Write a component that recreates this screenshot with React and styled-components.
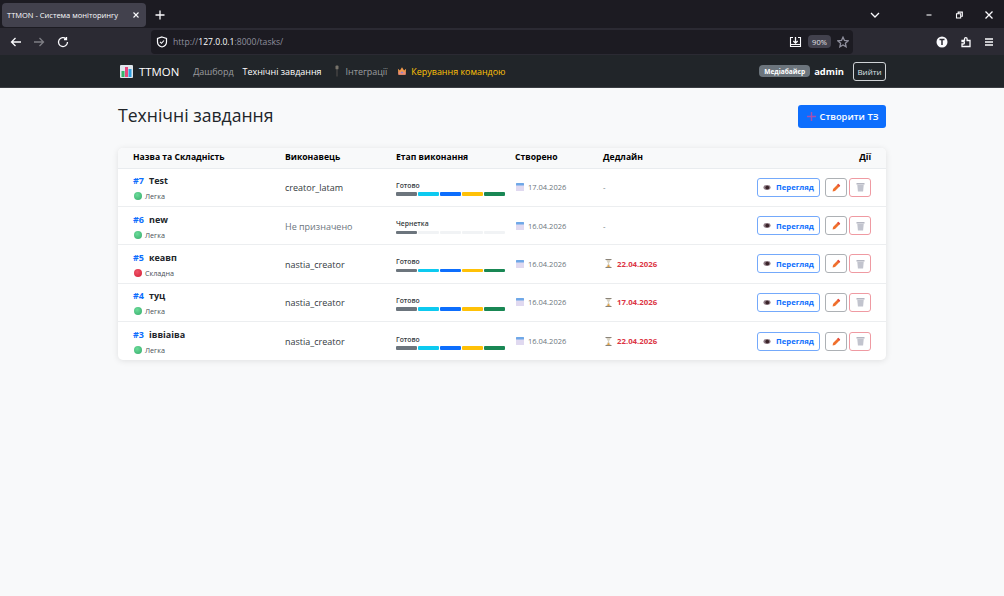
import React from 'react';
import styled, { createGlobalStyle } from 'styled-components';

const GlobalStyle = createGlobalStyle`
  html, body {
    margin: 0;
    height: 100%;
    background: #f8f9fa;
  }
  body {
    font-family: 'Open Sans', 'Noto Sans', 'Liberation Sans', sans-serif;
    overflow: hidden;
  }
`;

const Page = styled.div`
  width: 1004px;
  height: 596px;
  display: flex;
  flex-direction: column;
  background: #f8f9fa;
`;

/* browser chrome */
const TabStrip = styled.div`
  height: 28px;
  padding: 2px 0 0 2px;
  box-sizing: border-box;
  background: #1c1b22;
  display: flex;
  align-items: flex-start;
  color: #fbfbfe;
`;

const Tab = styled.div`
  width: 144px;
  height: 24px;
  padding: 0 5px;
  margin-top: 1px;
  box-sizing: border-box;
  background: #42414d;
  border-radius: 4px;
  display: flex;
  align-items: center;
  justify-content: space-between;
  font-size: 7.5px;
  white-space: nowrap;
`;

const StripButton = styled.div`
  display: flex;
  align-items: center;
  justify-content: center;
  width: 28px;
  height: 24px;
  margin-top: 1px;
`;

const WindowButtons = styled.div`
  margin-left: auto;
  display: flex;
  align-items: center;
  height: 26px;
`;

const WindowButton = styled.div`
  width: 30px;
  height: 26px;
  display: flex;
  align-items: center;
  justify-content: center;
`;

const Chevron = styled(WindowButton)`
  margin-right: 24px;
`;

const Toolbar = styled.div`
  height: 27px;
  background: #2b2a33;
  display: flex;
  align-items: center;
  padding-left: 4px;
  color: #fbfbfe;
`;

const ToolIcon = styled.div`
  width: 23.5px;
  height: 24px;
  display: flex;
  align-items: center;
  justify-content: center;
  opacity: ${p => (p.$dim ? 0.4 : 1)};
`;

const UrlBar = styled.div`
  width: 702px;
  height: 24px;
  margin-left: 76.5px;
  padding: 0 4px 0 5px;
  box-sizing: border-box;
  border-radius: 4px;
  background: #1c1b22;
  display: flex;
  align-items: center;
  gap: 5px;
  font-size: 8.6px;
  color: #8f8f9d;
`;

const Host = styled.span`
  color: #fbfbfe;
`;

const UrlRight = styled.div`
  margin-left: auto;
  display: flex;
  align-items: center;
  gap: 6px;
`;

const Zoom = styled.span`
  width: 23px;
  height: 13px;
  border-radius: 4px;
  background: #42414d;
  color: #e0e0e6;
  font-size: 7.5px;
  display: flex;
  align-items: center;
  justify-content: center;
`;

const ToolRight = styled.div`
  margin-left: auto;
  margin-right: 3px;
  display: flex;
  align-items: center;
`;

/* navbar */
const Navbar = styled.nav`
  height: 33px;
  box-sizing: border-box;
  background: #212529;
  border-bottom: 1px solid #3a3d42;
  padding: 0 118px 0 120px;
  display: flex;
  align-items: center;
`;

const Brand = styled.div`
  display: flex;
  align-items: center;
  gap: 6px;
  font-size: 11.4px;
  color: #fff;
  margin-right: 14px;
`;

const NavLink = styled.span`
  font-size: 8.95px;
  margin-right: ${p => p.$gap || 10}px;
  color: ${p => p.$color || 'rgba(255,255,255,.55)'};
  display: flex;
  align-items: center;
  gap: ${p => p.$iconGap || 4}px;
`;

const UserBox = styled.div`
  margin-left: auto;
  display: flex;
  align-items: center;
`;

const RoleBadge = styled.span`
  background: #6c757d;
  color: #fff;
  border-radius: 4px;
  font-size: 6.6px;
  font-weight: 700;
  padding: 1.5px 5px;
  margin-right: 4px;
  line-height: 9px;
`;

const UserName = styled.span`
  color: #fff;
  font-size: 9.4px;
  font-weight: 700;
  margin-right: 9px;
`;

const LogoutButton = styled.span`
  width: 33px;
  height: 19px;
  box-sizing: border-box;
  border: 1px solid #d0d3d6;
  border-radius: 3px;
  color: #dee2e6;
  font-size: 8px;
  display: flex;
  align-items: center;
  justify-content: center;
`;

/* content */
const Container = styled.main`
  width: 768px;
  margin: 0 0 0 118px;
  padding-top: 17px;
`;

const PageHeader = styled.div`
  display: flex;
  align-items: center;
  justify-content: space-between;
  height: 23px;
  margin-bottom: 20px;
`;

const Title = styled.h1`
  margin: 0 0 4px;
  font-size: 17.6px;
  font-weight: 400;
  color: #212529;
`;

const CreateButton = styled.div`
  width: 88px;
  height: 23px;
  border-radius: 3px;
  background: #0d6efd;
  color: #fff;
  font-size: 9.4px;
  font-weight: 600;
  display: flex;
  align-items: center;
  justify-content: center;
  gap: 3px;
`;

const TableCard = styled.section`
  background: #fff;
  border-radius: 5px;
  box-shadow: 0 1px 6px rgba(0, 0, 0, .1);
  overflow: hidden;
`;

const gridColumns = '152px 111px 119px 88px 1fr';

const HeadRow = styled.div`
  display: grid;
  grid-template-columns: ${gridColumns};
  height: 20.5px;
  box-sizing: border-box;
  padding: 0 15px 2px;
  align-items: center;
  background: #f8f9fa;
  border-bottom: 1px solid #e9ecef;
  font-size: 8.6px;
  font-weight: 700;
  color: #000;
`;

const HeadActions = styled.span`
  text-align: right;
`;

const Row = styled.div`
  display: grid;
  grid-template-columns: ${gridColumns};
  height: 38.4px;
  box-sizing: border-box;
  padding: 0 15px;
  align-items: center;
  border-bottom: ${p => (p.$last ? 'none' : '1px solid #eceef0')};
`;

const TaskCell = styled.div`
  display: flex;
  flex-direction: column;
  gap: 4px;
  padding-top: 2px;
`;

const TaskTitle = styled.div`
  display: flex;
  align-items: center;
  gap: 5px;
  font-size: 9px;
  font-weight: 700;
  color: #212529;
  line-height: 12px;
`;

const TaskId = styled.span`
  color: #0d6efd;
`;

const Difficulty = styled.div`
  display: flex;
  align-items: center;
  gap: 3px;
  margin-left: 1px;
  font-size: 7.2px;
  color: #495057;
  line-height: 10px;
`;

const Dot = styled.span`
  width: 8px;
  height: 8px;
  border-radius: 50%;
  background: ${p => (p.$hard
    ? 'radial-gradient(circle at 40% 35%, #f0556a, #d21f35)'
    : 'radial-gradient(circle at 40% 35%, #6cdc9a, #35ab6b)')};
`;

const Assignee = styled.span`
  font-size: 9px;
  padding-top: 1px;
  color: ${p => (p.$none ? '#6c757d' : '#343a40')};
`;

const Stage = styled.div`
  display: flex;
  flex-direction: column;
  gap: 2.5px;
  width: 109px;
  padding-top: 2px;
`;

const StageLabel = styled.span`
  font-size: 6.8px;
  font-weight: 600;
  color: #343a40;
  line-height: 9px;
`;

const StageBar = styled.div`
  display: grid;
  grid-template-columns: repeat(5, 1fr);
  gap: 1.5px;
`;

const StageStep = styled.span`
  height: 3.5px;
  border-radius: 1px;
  background: ${p => p.$color || '#f1f3f5'};
`;

const DateCell = styled.div`
  display: flex;
  align-items: center;
  gap: 4px;
  padding-left: 1px;
  font-size: 7.5px;
  color: #6c757d;
`;

const Deadline = styled.div`
  display: flex;
  align-items: center;
  gap: 5px;
  margin-left: ${p => (p.$late ? 2 : 0)}px;
  font-size: 7.8px;
  color: ${p => (p.$late ? '#dc3545' : '#6c757d')};
  font-weight: ${p => (p.$late ? 700 : 400)};
`;

const DeadlineCell = styled.div`
  display: flex;
  align-items: center;
  justify-content: space-between;
`;

const Actions = styled.div`
  display: flex;
  align-items: center;
  gap: 2px;
`;

const ActionButton = styled.div`
  height: 19px;
  width: 22px;
  box-sizing: border-box;
  border-radius: 3px;
  border: 1px solid ${p => p.$border};
  display: flex;
  align-items: center;
  justify-content: center;
`;

const ViewButton = styled(ActionButton)`
  width: 63px;
  margin-right: 3px;
  gap: 5px;
  font-size: 7.7px;
  font-weight: 700;
  color: #0d6efd;
`;

const ChartIcon = () => (
  <svg width="13" height="13" viewBox="0 0 13 13">
    <rect width="13" height="13" rx="1" fill="#dfe6ec" />
    <rect x="1.5" y="6" width="3" height="6" fill="#35b56b" />
    <rect x="5" y="2" width="3" height="10" fill="#e8467c" />
    <rect x="8.5" y="4" width="3" height="8" fill="#2f9fe0" />
  </svg>
);

const PinIcon = () => (
  <svg width="6" height="12" viewBox="0 0 6 12">
    <rect x="1.5" y="0.5" width="3" height="4" rx="1" fill="#77736a" />
    <rect x="2.4" y="4.5" width="1.2" height="7" fill="#4b4a48" />
  </svg>
);

const CrownIcon = () => (
  <svg width="10" height="10" viewBox="0 0 11 10">
    <path d="M1 2.5 3.2 4.5 5.5 1 7.8 4.5 10 2.5 9.4 9H1.6Z" fill="#f2994a" />
    <rect x="1.6" y="6" width="7.8" height="3" fill="#e98a7a" />
    <circle cx="5.5" cy="6.5" r="1" fill="#7a83d8" />
  </svg>
);

const PlusIcon = () => (
  <svg width="11" height="11" viewBox="0 0 11 11">
    <path d="M5.5 1v9M1 5.5h9" stroke="#a84fb0" strokeWidth="1.4" />
  </svg>
);

const EyeIcon = () => (
  <svg width="8" height="7" viewBox="0 0 9 7">
    <ellipse cx="4.5" cy="3.5" rx="4" ry="2.8" fill="#8d7a84" />
    <circle cx="4.8" cy="3.5" r="2.1" fill="#3a2328" />
  </svg>
);

const PencilIcon = () => (
  <svg width="9" height="9" viewBox="0 0 9 9">
    <path d="M6.3.8 8.2 2.7 3 7.9.6 8.4 1.1 6Z" fill="#f0702c" />
    <path d="M6.3.8 8.2 2.7 7.2 3.7 5.3 1.8Z" fill="#e2484a" />
  </svg>
);

const TrashIcon = () => (
  <svg width="9" height="10" viewBox="0 0 9 10">
    <rect x="0.5" y="1" width="8" height="1.6" fill="#b5b7c2" />
    <path d="M1.3 3h6.4l-.6 6.6H1.9Z" fill="#c2c4ce" />
  </svg>
);

const CalendarIcon = () => (
  <svg width="8" height="8" viewBox="0 0 8 8">
    <rect width="8" height="8" rx="0.6" fill="#e0d9f0" />
    <rect width="8" height="2.6" rx="0.6" fill="#6fa8e8" />
  </svg>
);

const HourglassIcon = () => (
  <svg width="7" height="9" viewBox="0 0 7 9">
    <path d="M.5.5h6M.5 8.5h6" stroke="#8a8378" />
    <path d="M1.2 1h4.6L3.9 4.5 5.8 8H1.2L3.1 4.5Z" fill="#d9d3c4" />
    <path d="M2.2 8 3.5 5.5 4.8 8Z" fill="#e9a13c" />
  </svg>
);

const ShieldIcon = () => (
  <svg width="12" height="12" viewBox="0 0 12 12" fill="none">
    <path d="M6 1 10.5 2.5V6C10.5 8.5 8.5 10.3 6 11 3.5 10.3 1.5 8.5 1.5 6V2.5Z" stroke="#fbfbfe" strokeWidth="1.2" />
    <path d="M4 5.8 5.5 7.3 8 4.5" stroke="#fbfbfe" strokeWidth="1.1" />
  </svg>
);

const SaveIcon = () => (
  <svg width="13" height="12" viewBox="0 0 13 12" fill="none" stroke="#fbfbfe" strokeWidth="1.1">
    <path d="M4 1.500H1.500V10.500H11.500V1.500H9" />
    <path d="M6.500 1V7M4.300 5 6.500 7.200 8.700 5" strokeWidth="1.300" />
    <path d="M1.500 8.500H11.500" />
  </svg>
);

const Line = ({ d, w = 12, size = 12 }) => (
  <svg width={size} height={size} viewBox={`0 0 ${w} ${w}`} fill="none" stroke="currentColor" strokeWidth="1.3">
    <path d={d} />
  </svg>
);

const PROGRESS = ['#6c757d', '#0dcaf0', '#0d6efd', '#ffc107', '#198754'];

const TASKS = [
  { id: 7, name: 'Test', hard: false, user: 'creator_latam', done: 5, created: '17.04.2026', deadline: null },
  { id: 6, name: 'new', hard: false, user: 'Не призначено', none: true, done: 1, created: '16.04.2026', deadline: null },
  { id: 5, name: 'кеавп', hard: true, user: 'nastia_creator', done: 5, created: '16.04.2026', deadline: '22.04.2026' },
  { id: 4, name: 'туц', hard: false, user: 'nastia_creator', done: 5, created: '16.04.2026', deadline: '17.04.2026' },
  { id: 3, name: 'іввіаіва', hard: false, user: 'nastia_creator', done: 5, created: '16.04.2026', deadline: '22.04.2026' },
];

const BrowserChrome = () => (
  <>
    <TabStrip>
      <Tab>
        <span>TTMON - Система моніторингу</span>
        <Line d="M3 3l6 6M9 3l-6 6" size={10} />
      </Tab>
      <StripButton>
        <Line d="M6 1.5v9M1.5 6h9" />
      </StripButton>
      <WindowButtons>
        <Chevron><Line d="M2 4l4 4 4-4" /></Chevron>
        <WindowButton><Line d="M3 6h6" size={10} /></WindowButton>
        <WindowButton><Line d="M3 4.5h5v5H3zM5 4.5V2.500h5v5H8" size={10} /></WindowButton>
        <WindowButton><Line d="M2.500 2.500l7 7M9.500 2.500l-7 7" /></WindowButton>
      </WindowButtons>
    </TabStrip>
    <Toolbar>
      <ToolIcon><Line d="M11 6H1.500M5.500 2 1.500 6l4 4" /></ToolIcon>
      <ToolIcon $dim><Line d="M1 6h9.500M6.500 2l4 4-4 4" /></ToolIcon>
      <ToolIcon><Line d="M10.500 6A4.500 4.500 0 1 1 9 2.700M9.500 1v2.500H7" /></ToolIcon>
      <UrlBar>
        <ShieldIcon />
        <span>http://<Host>127.0.0.1</Host>:8000/tasks/</span>
        <UrlRight>
          <SaveIcon />
          <Zoom>90%</Zoom>
          <Line d="M6 1.200 7.500 4.500 11 4.900 8.400 7.200 9.100 10.800 6 9 2.900 10.800 3.600 7.200 1 4.900 4.500 4.500Z" />
        </UrlRight>
      </UrlBar>
      <ToolRight>
        <ToolIcon>
          <svg width="12" height="12" viewBox="0 0 12 12">
            <circle cx="6" cy="6" r="5.5" fill="#fbfbfe" />
            <path d="M3.5 3.5h5M6 3.5v5.500" stroke="#2b2a33" strokeWidth="1.5" />
          </svg>
        </ToolIcon>
        <ToolIcon><Line d="M2 4.500h2.500V3a1.300 1.300 0 0 1 2.600 0v1.500H10v6H2v-2.500h1.200a1.200 1.200 0 0 0 0-2.500H2Z" /></ToolIcon>
        <ToolIcon><Line d="M2 3h8M2 6h8M2 9h8" /></ToolIcon>
      </ToolRight>
    </Toolbar>
  </>
);

const TaskRow = ({ task, last }) => (
  <Row $last={last}>
    <TaskCell>
      <TaskTitle>
        <TaskId>#{task.id}</TaskId>
        {task.name}
      </TaskTitle>
      <Difficulty>
        <Dot $hard={task.hard} />
        {task.hard ? 'Складна' : 'Легка'}
      </Difficulty>
    </TaskCell>
    <Assignee $none={task.none}>{task.user}</Assignee>
    <Stage>
      <StageLabel>{task.done === 5 ? 'Готово' : 'Чернетка'}</StageLabel>
      <StageBar>
        {PROGRESS.map((color, i) => (
          <StageStep key={color} $color={i < task.done ? color : undefined} />
        ))}
      </StageBar>
    </Stage>
    <DateCell>
      <CalendarIcon />
      {task.created}
    </DateCell>
    <DeadlineCell>
      <Deadline $late={!!task.deadline}>
        {task.deadline ? <HourglassIcon /> : null}
        {task.deadline || '-'}
      </Deadline>
      <Actions>
        <ViewButton $border="#74a9fb">
          <EyeIcon />
          Перегляд
        </ViewButton>
        <ActionButton $border="#adb1b5"><PencilIcon /></ActionButton>
        <ActionButton $border="#ef9aa2"><TrashIcon /></ActionButton>
      </Actions>
    </DeadlineCell>
  </Row>
);

const App = () => (
  <Page>
    <GlobalStyle />
    <BrowserChrome />
    <Navbar>
      <Brand><ChartIcon />TTMON</Brand>
      <NavLink $gap={9}>Дашборд</NavLink>
      <NavLink $gap={12} $color="#fff">Технічні завдання</NavLink>
      <NavLink $gap={10} $iconGap={6}><PinIcon />Інтеграції</NavLink>
      <NavLink $color="#ffc107"><CrownIcon />Керування командою</NavLink>
      <UserBox>
        <RoleBadge>Медіабайєр</RoleBadge>
        <UserName>admin</UserName>
        <LogoutButton>Вийти</LogoutButton>
      </UserBox>
    </Navbar>
    <Container>
      <PageHeader>
        <Title>Технічні завдання</Title>
        <CreateButton><PlusIcon />Створити ТЗ</CreateButton>
      </PageHeader>
      <TableCard>
        <HeadRow>
          <span>Назва та Складність</span>
          <span>Виконавець</span>
          <span>Етап виконання</span>
          <span>Створено</span>
          <DeadlineCell>
            <span>Дедлайн</span>
            <HeadActions>Дії</HeadActions>
          </DeadlineCell>
        </HeadRow>
        {TASKS.map((task, i) => (
          <TaskRow key={task.id} task={task} last={i === TASKS.length - 1} />
        ))}
      </TableCard>
    </Container>
  </Page>
);

export default App;
